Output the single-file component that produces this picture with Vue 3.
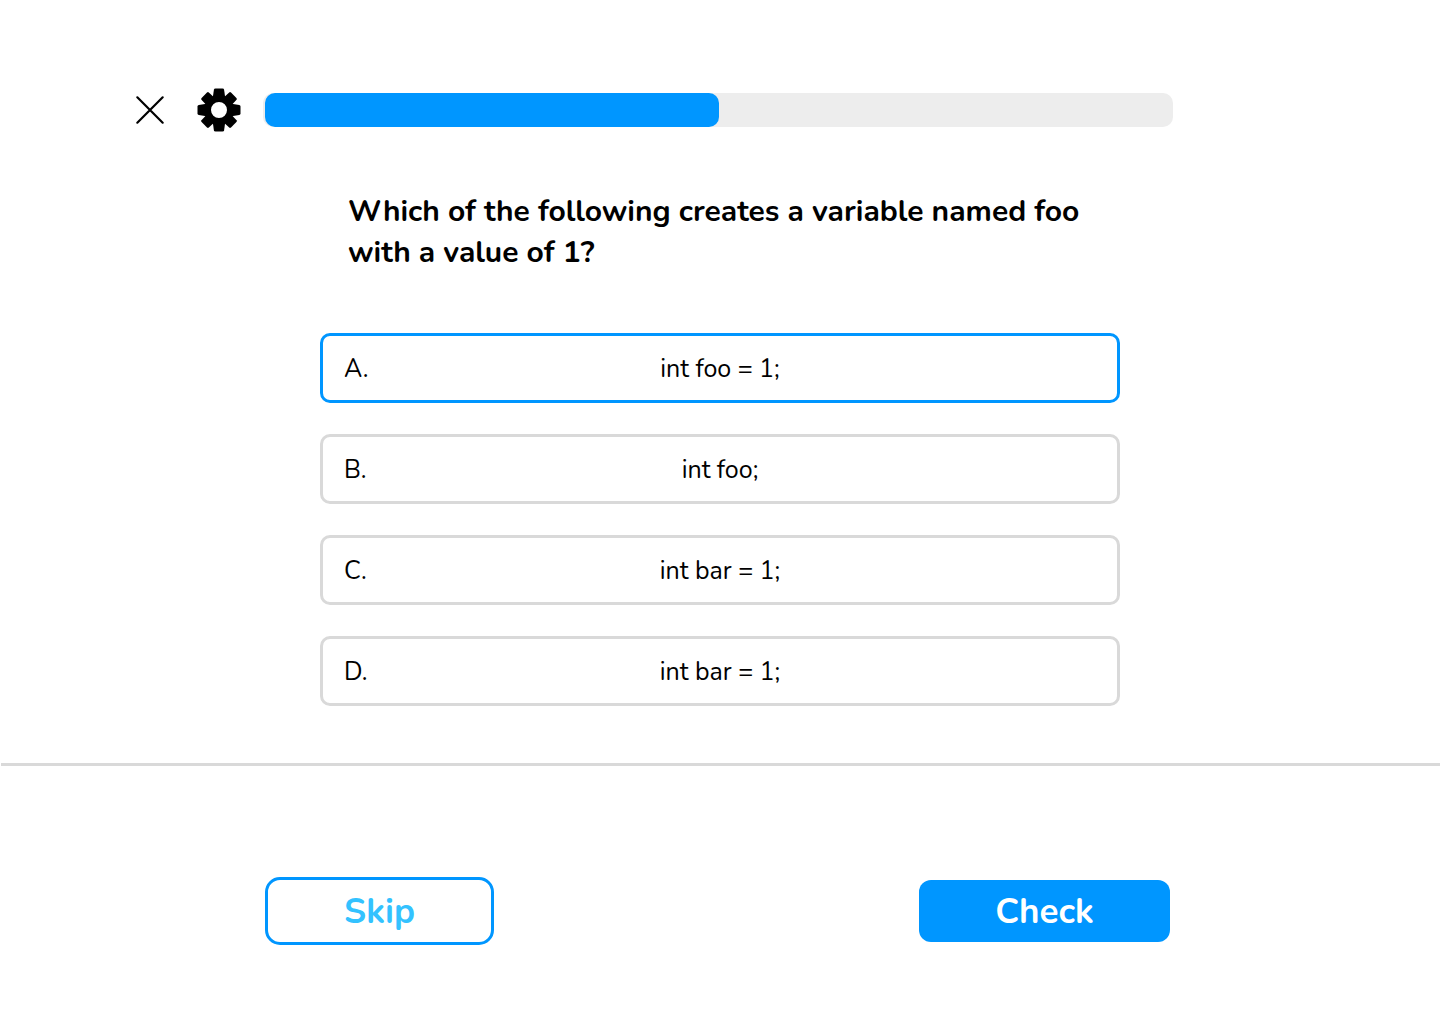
<script setup>
import { ref } from 'vue'

const progress = ref(50)
const selected = ref('A')
const options = [
  { letter: 'A', code: 'int foo = 1;' },
  { letter: 'B', code: 'int foo;' },
  { letter: 'C', code: 'int bar = 1;' },
  { letter: 'D', code: 'int bar = 1;' },
]
const straightTeeth = [0, 90, 180, 270]
const diagonalTeeth = [45, 135, 225, 315]
</script>

<template>
  <div class="quiz">
    <header class="top">
      <button class="icon" type="button" aria-label="Close">
        <svg width="36" height="36" viewBox="0 0 36 36" aria-hidden="true">
          <path d="M5.3 5.3 30.7 30.7M30.7 5.3 5.3 30.7" fill="none" stroke="#000" stroke-width="2.2" stroke-linecap="round" />
        </svg>
      </button>
      <button class="icon gear" type="button" aria-label="Settings">
        <svg width="44" height="44" viewBox="-22 -22 44 44" aria-hidden="true">
          <circle r="11.4" fill="none" stroke="#000" stroke-width="6.8" />
          <path
            v-for="angle in straightTeeth"
            :key="angle"
            :transform="`rotate(${angle})`"
            d="M-6.2-12.5-5.1-20.2Q-4.9-21.5-3.5-21.5H3.5Q4.9-21.5 5.1-20.2L6.2-12.5Z"
          />
          <path
            v-for="angle in diagonalTeeth"
            :key="angle"
            :transform="`rotate(${angle})`"
            d="M-5.4-12.5-5.2-19.6Q-5.1-20.8-3.8-20.8H3.8Q5.1-20.8 5.2-19.6L5.4-12.5Z"
          />
        </svg>
      </button>
      <div class="track" role="progressbar" aria-label="Lesson progress" :aria-valuenow="progress" aria-valuemin="0" aria-valuemax="100">
        <div class="fill" :style="{ width: progress + '%' }"></div>
      </div>
    </header>

    <main class="content">
      <h1 id="question">Which of the following creates a variable named foo with a value of 1?</h1>
      <div class="options" role="radiogroup" aria-labelledby="question">
        <label v-for="option in options" :key="option.letter" class="option" :class="{ active: selected === option.letter }">
          <input v-model="selected" type="radio" name="answer" :value="option.letter" />
          <span>{{ option.letter }}.</span>
          <span class="code">{{ option.code }}</span>
        </label>
      </div>
    </main>

    <footer class="bottom">
      <button class="action skip" type="button">Skip</button>
      <button class="action check" type="button">Check</button>
    </footer>
  </div>
</template>

<style>
body {
  margin: 0;
  background: #fff;
}
</style>

<style scoped>
.quiz {
  color: #000;
  font-family: Nunito, Lato, sans-serif;
}
button {
  font: inherit;
  cursor: pointer;
}
.top {
  display: flex;
  align-items: center;
  padding: 88px 267px 0 132px;
}
.icon {
  display: block;
  flex: none;
  padding: 0;
  border: 0;
  background: none;
}
.icon svg {
  display: block;
}
.gear {
  margin: 0 22px 0 29px;
}
.track {
  flex: 1;
  height: 34px;
  padding-left: 2px;
  border-radius: 10px;
  background: #ededed;
}
.fill {
  height: 100%;
  border-radius: 10px;
  background: #0096ff;
}
.content {
  max-width: 800px;
  margin: 59px auto 0;
}
h1 {
  margin: 0;
  padding: 0 28px;
  font-size: 30px;
  font-weight: 700;
  line-height: 41px;
}
.options {
  display: grid;
  gap: 31px;
  margin-top: 60px;
}
.option {
  display: grid;
  grid-template-columns: 60px 1fr 60px;
  align-items: center;
  box-sizing: border-box;
  height: 70px;
  padding: 2px 21px 0;
  border: 3px solid #d9d9d9;
  border-radius: 10px;
  font-size: 25px;
  line-height: 34px;
  cursor: pointer;
}
.option input {
  position: absolute;
  margin: 0;
  opacity: 0;
}
.option.active {
  border-color: #0096ff;
}
.code {
  text-align: center;
}
.bottom {
  display: flex;
  align-items: center;
  justify-content: space-between;
  margin: 57px 0 0 1px;
  padding: 111px 270px 79px 264px;
  border-top: 3px solid #d9d9d9;
}
.action {
  box-sizing: border-box;
  padding: 2px 0 0;
  font-size: 35px;
  font-weight: 700;
  line-height: 48px;
}
.skip {
  width: 229px;
  height: 68px;
  border: 3px solid #0096ff;
  border-radius: 15px;
  background: #fff;
  color: #33c2ff;
}
.check {
  width: 251px;
  height: 62px;
  border: 0;
  border-radius: 12px;
  background: #0096ff;
  color: #fff;
}
</style>
